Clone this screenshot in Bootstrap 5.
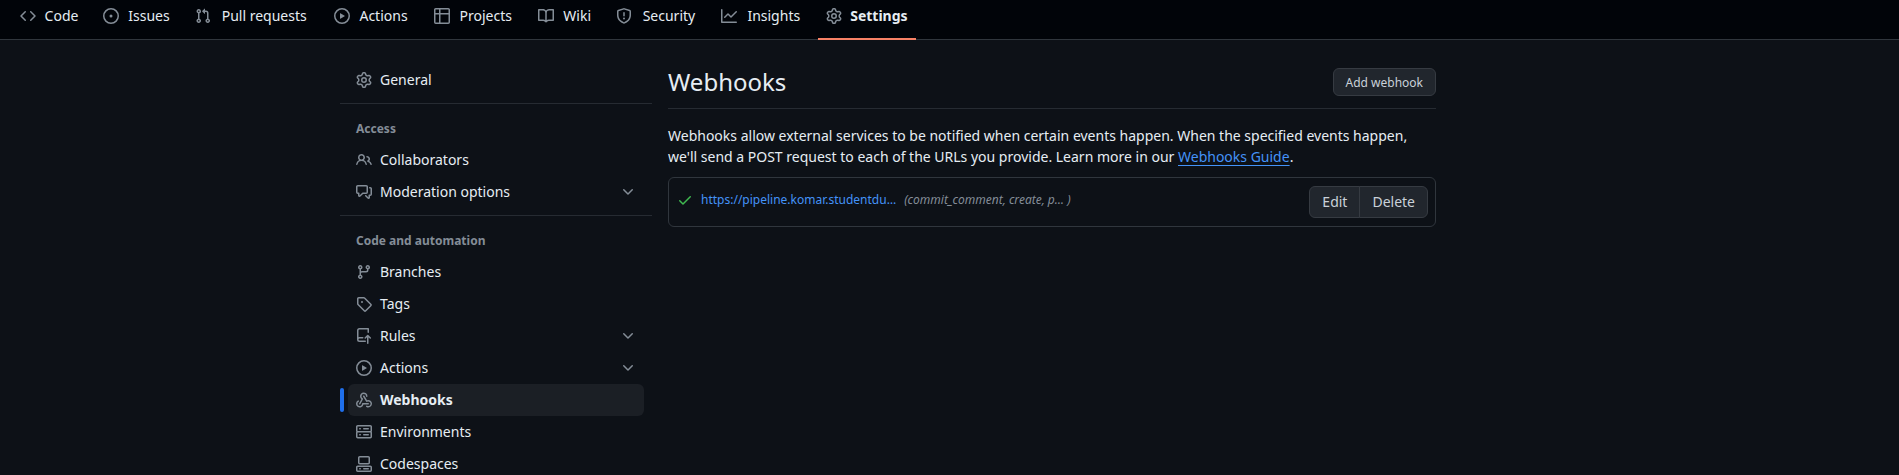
<!DOCTYPE html>
<html lang="en" data-bs-theme="dark">
<head>
<meta charset="utf-8">
<meta name="viewport" content="width=device-width, initial-scale=1">
<title>Webhooks</title>
<link href="https://cdn.jsdelivr.net/npm/bootstrap@5.3.0/dist/css/bootstrap.min.css" rel="stylesheet">
<style>
body{background:#0d1117;color:#e6edf3;font:14px/21px "Noto Sans",sans-serif;height:475px;overflow:hidden}
svg{width:16px;height:16px;fill:currentColor;flex:none;display:block}
.repo-nav{background:#010409;height:40px;padding-left:12px;gap:8px;border-bottom:1px solid #30363d;flex-wrap:nowrap}
.repo-nav .nav-link{display:flex;align-items:center;gap:8px;height:32px;padding:0 8px;color:#e6edf3;white-space:nowrap}
.repo-nav .nav-link.active{height:40px;padding-bottom:6px;border-bottom:2px solid #f78166;font-weight:700}
.nav-link span{margin-top:-1px}
/* reserve the bold width so that tabs keep their size when selected */
.repo-nav span{text-align:center}
.repo-nav span::before{content:attr(data-content);display:block;height:0;font-weight:700;visibility:hidden;overflow:hidden}
.repo-nav svg,.side svg{color:#848d97}
.page{width:1096px;margin-left:340px;gap:16px}
.side{width:312px;flex:none;padding-top:24px}
.side .nav-link{display:flex;align-items:center;gap:8px;height:32px;margin:0 8px;padding:0 8px;color:#e6edf3;border-radius:6px;position:relative}
.side .nav-link.active{background:#1b1f25;font-weight:700}
.side .nav-link.active::before{content:"";position:absolute;left:-8px;top:4px;width:4px;height:24px;border-radius:6px;background:#1f6feb}
.side hr{margin:7px 0 8px;border-top:1px solid #262b32;opacity:1}
.side h2{font-size:12px;line-height:18px;font-weight:700;color:#848d97;margin:0;padding:8px 16px 6px}
.main-col{width:768px;padding-top:24px}
.subhead{height:45px;border-bottom:1px solid #262b32;margin-bottom:16px}
.subhead h1{font-size:24px;line-height:36px;font-weight:400;margin:0;color:inherit}
.btn-gh{--bs-btn-bg:#21262d;--bs-btn-color:#c9d1d9;--bs-btn-border-color:#363b42;--bs-btn-border-radius:6px;--bs-btn-font-size:14px;--bs-btn-font-weight:400;--bs-btn-padding-x:12px;--bs-btn-padding-y:5px;--bs-btn-line-height:20px}
.btn-add{--bs-btn-font-size:12px;--bs-btn-padding-x:12px;padding-top:4px;padding-bottom:2px}
.guide{color:#4493f8;text-decoration:underline;text-underline-offset:3px}
.hook-box{height:50px;border:1px solid #30363d;border-radius:6px;padding:0 7px 0 8px;font-size:12px;line-height:18px;margin-top:10px}
.hook-box .url,.hook-box .events{padding-bottom:4px}
.hook-box .url{color:#4493f8;text-decoration:none}
.hook-box .events{color:#848d97;font-style:italic}
.hook-box .ok{color:#3fb950;margin-bottom:4px}
</style>
</head>
<body>
<svg class="d-none" aria-hidden="true">
<symbol id="code" viewBox="0 0 16 16"><path d="m11.28 3.22 4.25 4.25a.75.75 0 0 1 0 1.06l-4.25 4.25a.749.749 0 0 1-1.275-.326.749.749 0 0 1 .215-.734L13.94 8l-3.72-3.72a.749.749 0 0 1 .326-1.275.749.749 0 0 1 .734.215Zm-6.56 0a.751.751 0 0 1 1.042.018.751.751 0 0 1 .018 1.042L2.06 8l3.72 3.72a.749.749 0 0 1-.326 1.275.749.749 0 0 1-.734-.215L.47 8.53a.75.75 0 0 1 0-1.06Z"/></symbol>
<symbol id="issue" viewBox="0 0 16 16"><path d="M8 9.5a1.5 1.5 0 1 0 0-3 1.5 1.5 0 0 0 0 3Z"/><path d="M8 0a8 8 0 1 1 0 16A8 8 0 0 1 8 0ZM1.5 8a6.5 6.5 0 1 0 13 0 6.5 6.5 0 0 0-13 0Z"/></symbol>
<symbol id="pull" viewBox="0 0 16 16"><path d="M1.5 3.25a2.25 2.25 0 1 1 3 2.122v5.256a2.251 2.251 0 1 1-1.5 0V5.372A2.25 2.25 0 0 1 1.5 3.25Zm5.677-.177L9.573.677A.25.25 0 0 1 10 .854V2.5h1A2.5 2.5 0 0 1 13.5 5v5.628a2.251 2.251 0 1 1-1.5 0V5a1 1 0 0 0-1-1h-1v1.646a.25.25 0 0 1-.427.177L7.177 3.427a.25.25 0 0 1 0-.354ZM3.75 2.5a.75.75 0 1 0 0 1.5.75.75 0 0 0 0-1.5Zm0 9.5a.75.75 0 1 0 0 1.5.75.75 0 0 0 0-1.5Zm8.25.75a.75.75 0 1 0 1.5 0 .75.75 0 0 0-1.5 0Z"/></symbol>
<symbol id="play" viewBox="0 0 16 16"><path d="M8 0a8 8 0 1 1 0 16A8 8 0 0 1 8 0ZM1.5 8a6.5 6.5 0 1 0 13 0 6.5 6.5 0 0 0-13 0Zm4.879-2.773 4.264 2.559a.25.25 0 0 1 0 .428l-4.264 2.559A.25.25 0 0 1 6 10.559V5.442a.25.25 0 0 1 .379-.215Z"/></symbol>
<symbol id="table" viewBox="0 0 16 16"><path d="M0 1.75C0 .784.784 0 1.75 0h12.5C15.216 0 16 .784 16 1.75v12.5A1.75 1.75 0 0 1 14.25 16H1.75A1.75 1.75 0 0 1 0 14.25ZM6.5 6.5v8h7.75a.25.25 0 0 0 .25-.25V6.5Zm8-1.5V1.75a.25.25 0 0 0-.25-.25H6.5V5Zm-13 1.5v7.75c0 .138.112.25.25.25H5v-8ZM5 5V1.5H1.75a.25.25 0 0 0-.25.25V5Z"/></symbol>
<symbol id="book" viewBox="0 0 16 16"><path d="M0 1.75A.75.75 0 0 1 .75 1h4.253c1.227 0 2.317.59 3 1.501A3.743 3.743 0 0 1 11.006 1h4.245a.75.75 0 0 1 .75.75v10.5a.75.75 0 0 1-.75.75h-4.507a2.25 2.25 0 0 0-1.591.659l-.622.621a.75.75 0 0 1-1.06 0l-.622-.621A2.25 2.25 0 0 0 5.258 13H.75a.75.75 0 0 1-.75-.75Zm7.251 10.324.004-5.073-.002-2.253A2.25 2.25 0 0 0 5.003 2.5H1.5v9h3.757a3.75 3.75 0 0 1 1.994.574ZM8.755 4.75l-.004 7.322a3.752 3.752 0 0 1 1.992-.572H14.5v-9h-3.495a2.25 2.25 0 0 0-2.25 2.25Z"/></symbol>
<symbol id="shield" viewBox="0 0 16 16"><path d="M7.467.133a1.748 1.748 0 0 1 1.066 0l5.25 1.68A1.75 1.75 0 0 1 15 3.48V7c0 1.566-.32 3.182-1.303 4.682-.983 1.498-2.585 2.813-5.032 3.855a1.697 1.697 0 0 1-1.33 0c-2.447-1.042-4.049-2.357-5.032-3.855C1.32 10.182 1 8.566 1 7V3.48a1.75 1.75 0 0 1 1.217-1.667Zm.61 1.429a.25.25 0 0 0-.153 0l-5.25 1.68a.25.25 0 0 0-.174.238V7c0 1.358.275 2.666 1.057 3.86.784 1.194 2.121 2.34 4.366 3.297a.196.196 0 0 0 .154 0c2.245-.956 3.582-2.104 4.366-3.298C13.225 9.666 13.5 8.36 13.5 7V3.48a.251.251 0 0 0-.174-.237l-5.25-1.68ZM8.75 4.75v3a.75.75 0 0 1-1.5 0v-3a.75.75 0 0 1 1.5 0ZM9 10.5a1 1 0 1 1-2 0 1 1 0 0 1 2 0Z"/></symbol>
<symbol id="graph" viewBox="0 0 16 16"><path d="M1.5 1.75V13.5h13.75a.75.75 0 0 1 0 1.5H.75a.75.75 0 0 1-.75-.75V1.75a.75.75 0 0 1 1.5 0Zm14.28 2.53-5.25 5.25a.75.75 0 0 1-1.06 0L7 7.06 4.28 9.78a.751.751 0 0 1-1.042-.018.751.751 0 0 1-.018-1.042l3.25-3.25a.75.75 0 0 1 1.06 0L10 7.94l4.72-4.72a.751.751 0 0 1 1.042.018.751.751 0 0 1 .018 1.042Z"/></symbol>
<symbol id="gear" viewBox="0 0 16 16"><path d="M8 0a8.2 8.2 0 0 1 .701.031C9.444.095 9.99.645 10.16 1.29l.288 1.107c.018.066.079.158.212.224.231.114.454.243.668.386.123.082.233.09.299.071l1.103-.303c.644-.176 1.392.021 1.82.63.27.385.506.792.704 1.218.315.675.111 1.422-.364 1.891l-.814.806c-.049.048-.098.147-.088.294.016.257.016.515 0 .772-.01.147.038.246.088.294l.814.806c.475.469.679 1.216.364 1.891a7.977 7.977 0 0 1-.704 1.217c-.428.61-1.176.807-1.82.63l-1.102-.302c-.067-.019-.177-.011-.3.071a5.909 5.909 0 0 1-.668.386c-.133.066-.194.158-.211.224l-.29 1.106c-.168.646-.715 1.196-1.458 1.26a8.006 8.006 0 0 1-1.402 0c-.743-.064-1.289-.614-1.458-1.26l-.289-1.106c-.018-.066-.079-.158-.212-.224a5.738 5.738 0 0 1-.668-.386c-.123-.082-.233-.09-.299-.071l-1.103.303c-.644.176-1.392-.021-1.82-.63a8.12 8.12 0 0 1-.704-1.218c-.315-.675-.111-1.422.363-1.891l.815-.806c.05-.048.098-.147.088-.294a6.214 6.214 0 0 1 0-.772c.01-.147-.038-.246-.088-.294l-.815-.806C.635 6.045.431 5.298.746 4.623a7.92 7.92 0 0 1 .704-1.217c.428-.61 1.176-.807 1.82-.63l1.102.302c.067.019.177.011.3-.071.214-.143.437-.272.668-.386.133-.066.194-.158.211-.224l.29-1.106C6.009.645 6.556.095 7.299.03 7.53.01 7.764 0 8 0Zm-.571 1.525c-.036.003-.108.036-.137.146l-.289 1.105c-.147.561-.549.967-.998 1.189-.173.086-.34.183-.5.29-.417.278-.97.423-1.529.27l-1.103-.303c-.109-.03-.175.016-.195.045-.22.312-.412.644-.573.99-.014.031-.021.11.059.19l.815.806c.411.406.562.957.53 1.456a4.709 4.709 0 0 0 0 .582c.032.499-.119 1.05-.53 1.456l-.815.806c-.081.08-.073.159-.059.19.162.346.353.677.573.989.02.03.085.076.195.046l1.102-.303c.56-.153 1.113-.008 1.53.27.161.107.328.204.501.29.447.222.85.629.997 1.189l.289 1.105c.029.109.101.143.137.146a6.6 6.6 0 0 0 1.142 0c.036-.003.108-.036.137-.146l.289-1.105c.147-.561.549-.967.998-1.189.173-.086.34-.183.5-.29.417-.278.97-.423 1.529-.27l1.103.303c.109.029.175-.016.195-.045.22-.313.411-.644.573-.99.014-.031.021-.11-.059-.19l-.815-.806c-.411-.406-.562-.957-.53-1.456a4.709 4.709 0 0 0 0-.582c-.032-.499.119-1.05.53-1.456l.815-.806c.081-.08.073-.159.059-.19a6.464 6.464 0 0 0-.573-.989c-.02-.03-.085-.076-.195-.046l-1.102.303c-.56.153-1.113.008-1.53-.27a4.44 4.44 0 0 0-.501-.29c-.447-.222-.85-.629-.997-1.189l-.289-1.105c-.029-.11-.101-.143-.137-.146a6.6 6.6 0 0 0-1.142 0ZM11 8a3 3 0 1 1-6 0 3 3 0 0 1 6 0ZM9.5 8a1.5 1.5 0 1 0-3.001.001A1.5 1.5 0 0 0 9.5 8Z"/></symbol>
<symbol id="people" viewBox="0 0 16 16"><path d="M2 5.5a3.5 3.5 0 1 1 5.898 2.549 5.508 5.508 0 0 1 3.034 4.084.75.75 0 1 1-1.482.235 4 4 0 0 0-7.9 0 .75.75 0 0 1-1.482-.236A5.507 5.507 0 0 1 3.102 8.05 3.493 3.493 0 0 1 2 5.5ZM11 4a3.001 3.001 0 0 1 2.22 5.018 5.01 5.01 0 0 1 2.56 3.012.749.749 0 0 1-.885.954.752.752 0 0 1-.549-.514 3.507 3.507 0 0 0-2.522-2.372.75.75 0 0 1-.574-.73v-.352a.75.75 0 0 1 .416-.672A1.5 1.5 0 0 0 11 5.5.75.75 0 0 1 11 4Zm-5.5-.5a2 2 0 1 0-.001 3.999A2 2 0 0 0 5.5 3.5Z"/></symbol>
<symbol id="chat" viewBox="0 0 16 16"><path d="M1.75 1h8.5c.966 0 1.75.784 1.75 1.75v5.5A1.75 1.75 0 0 1 10.25 10H7.061l-2.574 2.573A1.458 1.458 0 0 1 2 11.543V10h-.25A1.75 1.75 0 0 1 0 8.25v-5.5C0 1.784.784 1 1.75 1ZM1.5 2.75v5.5c0 .138.112.25.25.25h1a.75.75 0 0 1 .75.75v2.19l2.72-2.72a.749.749 0 0 1 .53-.22h3.5a.25.25 0 0 0 .25-.25v-5.5a.25.25 0 0 0-.25-.25h-8.5a.25.25 0 0 0-.25.25Zm13 2a.25.25 0 0 0-.25-.25h-.5a.75.75 0 0 1 0-1.5h.5c.966 0 1.75.784 1.75 1.75v5.5A1.75 1.75 0 0 1 14.25 12H14v1.543a1.458 1.458 0 0 1-2.487 1.03L9.22 12.28a.749.749 0 0 1 .326-1.275.749.749 0 0 1 .734.215l2.22 2.22v-2.19a.75.75 0 0 1 .75-.75h1a.25.25 0 0 0 .25-.25Z"/></symbol>
<symbol id="chev" viewBox="0 0 16 16"><path d="M12.78 5.22a.749.749 0 0 1 0 1.06l-4.25 4.25a.749.749 0 0 1-1.06 0L3.22 6.28a.749.749 0 1 1 1.06-1.06L8 8.939l3.72-3.719a.749.749 0 0 1 1.06 0Z"/></symbol>
<symbol id="branch" viewBox="0 0 16 16"><path d="M9.5 3.25a2.25 2.25 0 1 1 3 2.122V6A2.5 2.5 0 0 1 10 8.5H6a1 1 0 0 0-1 1v1.128a2.251 2.251 0 1 1-1.5 0V5.372a2.25 2.25 0 1 1 1.5 0v1.836A2.493 2.493 0 0 1 6 7h4a1 1 0 0 0 1-1v-.628A2.25 2.25 0 0 1 9.5 3.25Zm-6 0a.75.75 0 1 0 1.5 0 .75.75 0 0 0-1.5 0Zm8.25-.75a.75.75 0 1 0 0 1.5.75.75 0 0 0 0-1.5ZM4.25 12a.75.75 0 1 0 0 1.5.75.75 0 0 0 0-1.5Z"/></symbol>
<symbol id="tag" viewBox="0 0 16 16"><path d="M1 7.775V2.75C1 1.784 1.784 1 2.75 1h5.025c.464 0 .91.184 1.238.513l6.25 6.25a1.75 1.75 0 0 1 0 2.474l-5.026 5.026a1.75 1.75 0 0 1-2.474 0l-6.25-6.25A1.752 1.752 0 0 1 1 7.775Zm1.5 0c0 .066.026.13.073.177l6.25 6.25a.25.25 0 0 0 .354 0l5.025-5.025a.25.25 0 0 0 0-.354l-6.25-6.25a.25.25 0 0 0-.177-.073H2.75a.25.25 0 0 0-.25.25ZM6 5a1 1 0 1 1 0 2 1 1 0 0 1 0-2Z"/></symbol>
<symbol id="rules" viewBox="0 0 16 16"><path d="M1 2.5A2.5 2.5 0 0 1 3.5 0h8.75a.75.75 0 0 1 .75.75v3.5a.75.75 0 0 1-1.5 0V1.5h-8a1 1 0 0 0-1 1v6.708A2.493 2.493 0 0 1 3.5 9h3.25a.75.75 0 0 1 0 1.5H3.5a1 1 0 0 0 0 2h5.75a.75.75 0 0 1 0 1.5H3.5A2.5 2.5 0 0 1 1 11.5Z"/><path d="m9.2 10 2.55-2.55L14.3 10M11.75 7.8v7.45" fill="none" stroke="currentColor" stroke-width="1.5" stroke-linecap="round" stroke-linejoin="round"/></symbol>
<symbol id="hook" viewBox="0 0 16 16"><path d="M5.5 4.25a2.25 2.25 0 0 1 4.5 0 .75.75 0 0 0 1.5 0 3.75 3.75 0 1 0-6.14 2.889l-2.272 4.258a.75.75 0 0 0 1.324.706L7 7.25a.75.75 0 0 0-.309-1.015A2.25 2.25 0 0 1 5.5 4.25Z"/><path d="M7.364 3.607a.75.75 0 0 1 1.03.257l2.608 4.349a3.75 3.75 0 1 1-.628 6.785.75.75 0 0 1 .752-1.299 2.25 2.25 0 1 0-.033-3.88.75.75 0 0 1-1.03-.256L7.107 4.636a.75.75 0 0 1 .257-1.03Z"/><path d="M2.9 8.776A.75.75 0 0 1 2.625 9.8 2.25 2.25 0 1 0 6 11.75a.75.75 0 0 1 .75-.751h5.5a.75.75 0 0 1 0 1.5H7.425a3.751 3.751 0 1 1-5.55-3.998.75.75 0 0 1 1.024.274Z"/></symbol>
<symbol id="server" viewBox="0 0 16 16"><path d="M1.75 1h12.5c.966 0 1.75.784 1.75 1.75v4c0 .372-.116.717-.314 1 .198.283.314.628.314 1v4a1.75 1.75 0 0 1-1.75 1.75H1.75A1.75 1.75 0 0 1 0 12.75v-4c0-.358.109-.707.314-1a1.739 1.739 0 0 1-.314-1v-4C0 1.784.784 1 1.75 1ZM1.5 2.75v4c0 .138.112.25.25.25h12.5a.25.25 0 0 0 .25-.25v-4a.25.25 0 0 0-.25-.25H1.75a.25.25 0 0 0-.25.25Zm.25 5.75a.25.25 0 0 0-.25.25v4c0 .138.112.25.25.25h12.5a.25.25 0 0 0 .25-.25v-4a.25.25 0 0 0-.25-.25ZM7 4.75A.75.75 0 0 1 7.75 4h4.5a.75.75 0 0 1 0 1.5h-4.5A.75.75 0 0 1 7 4.75ZM7.75 10h4.5a.75.75 0 0 1 0 1.5h-4.5a.75.75 0 0 1 0-1.5ZM3 4.75A.75.75 0 0 1 3.75 4h.5a.75.75 0 0 1 0 1.5h-.5A.75.75 0 0 1 3 4.75ZM3.75 10h.5a.75.75 0 0 1 0 1.5h-.5a.75.75 0 0 1 0-1.5Z"/></symbol>
<symbol id="codespace" viewBox="0 0 16 16"><path d="M0 11.25c0-.966.784-1.75 1.75-1.75h12.5c.966 0 1.75.784 1.75 1.75v3A1.75 1.75 0 0 1 14.25 16H1.75A1.75 1.75 0 0 1 0 14.25Zm2-9.5C2 .784 2.784 0 3.75 0h8.5C13.216 0 14 .784 14 1.75v5a1.75 1.75 0 0 1-1.75 1.75h-8.5A1.75 1.75 0 0 1 2 6.75Zm1.75-.25a.25.25 0 0 0-.25.25v5c0 .138.112.25.25.25h8.5a.25.25 0 0 0 .25-.25v-5a.25.25 0 0 0-.25-.25Zm-2 9.5a.25.25 0 0 0-.25.25v3c0 .138.112.25.25.25h12.5a.25.25 0 0 0 .25-.25v-3a.25.25 0 0 0-.25-.25Z"/><path d="M7 12.75a.75.75 0 0 1 .75-.75h4.5a.75.75 0 0 1 0 1.5h-4.5a.75.75 0 0 1-.75-.75Zm-4 0a.75.75 0 0 1 .75-.75h.5a.75.75 0 0 1 0 1.5h-.5a.75.75 0 0 1-.75-.75Z"/></symbol>
<symbol id="check" viewBox="0 0 16 16"><path d="M13.78 4.22a.75.75 0 0 1 0 1.06l-7.25 7.25a.75.75 0 0 1-1.06 0L2.22 9.28a.751.751 0 0 1 .018-1.042.751.751 0 0 1 1.042-.018L6 10.94l6.72-6.72a.75.75 0 0 1 1.06 0Z"/></symbol>
</svg>

<nav class="nav repo-nav">
<a class="nav-link" href="#"><svg><use href="#code"/></svg><span data-content="Code">Code</span></a>
<a class="nav-link" href="#"><svg><use href="#issue"/></svg><span data-content="Issues">Issues</span></a>
<a class="nav-link" href="#"><svg><use href="#pull"/></svg><span data-content="Pull requests">Pull requests</span></a>
<a class="nav-link" href="#"><svg><use href="#play"/></svg><span data-content="Actions">Actions</span></a>
<a class="nav-link" href="#"><svg><use href="#table"/></svg><span data-content="Projects">Projects</span></a>
<a class="nav-link" href="#"><svg><use href="#book"/></svg><span data-content="Wiki">Wiki</span></a>
<a class="nav-link" href="#"><svg><use href="#shield"/></svg><span data-content="Security">Security</span></a>
<a class="nav-link" href="#"><svg><use href="#graph"/></svg><span data-content="Insights">Insights</span></a>
<a class="nav-link active" href="#"><svg><use href="#gear"/></svg><span data-content="Settings">Settings</span></a>
</nav>

<div class="page d-flex align-items-start">
<aside class="side nav flex-column flex-nowrap">
<a class="nav-link" href="#"><svg><use href="#gear"/></svg><span>General</span></a>
<hr>
<h2>Access</h2>
<a class="nav-link" href="#"><svg><use href="#people"/></svg><span>Collaborators</span></a>
<a class="nav-link" href="#"><svg><use href="#chat"/></svg><span>Moderation options</span><svg class="ms-auto"><use href="#chev"/></svg></a>
<hr>
<h2>Code and automation</h2>
<a class="nav-link" href="#"><svg><use href="#branch"/></svg><span>Branches</span></a>
<a class="nav-link" href="#"><svg><use href="#tag"/></svg><span>Tags</span></a>
<a class="nav-link" href="#"><svg><use href="#rules"/></svg><span>Rules</span><svg class="ms-auto"><use href="#chev"/></svg></a>
<a class="nav-link" href="#"><svg><use href="#play"/></svg><span>Actions</span><svg class="ms-auto"><use href="#chev"/></svg></a>
<a class="nav-link active" href="#"><svg><use href="#hook"/></svg><span>Webhooks</span></a>
<a class="nav-link" href="#"><svg><use href="#server"/></svg><span>Environments</span></a>
<a class="nav-link" href="#"><svg><use href="#codespace"/></svg><span>Codespaces</span></a>
</aside>
<main class="main-col">
<div class="subhead d-flex justify-content-between align-items-start">
<h1>Webhooks</h1>
<button class="btn btn-gh btn-add mt-1">Add webhook</button>
</div>
<p class="mb-0">Webhooks allow external services to be notified when certain events happen. When the specified events happen, we'll send a POST request to each of the URLs you provide. Learn more in our <a class="guide" href="#">Webhooks Guide</a>.</p>
<div class="hook-box d-flex align-items-center">
<svg class="ok"><use href="#check"/></svg>
<a class="url ms-2" href="#">https://pipeline.komar.studentdu…</a>
<span class="events ms-2">(commit_comment, create, p… )</span>
<div class="btn-group ms-auto">
<button class="btn btn-gh">Edit</button>
<button class="btn btn-gh">Delete</button>
</div>
</div>
</main>
</div>
<script src="https://cdn.jsdelivr.net/npm/bootstrap@5.3.0/dist/js/bootstrap.bundle.min.js"></script>
</body>
</html>
